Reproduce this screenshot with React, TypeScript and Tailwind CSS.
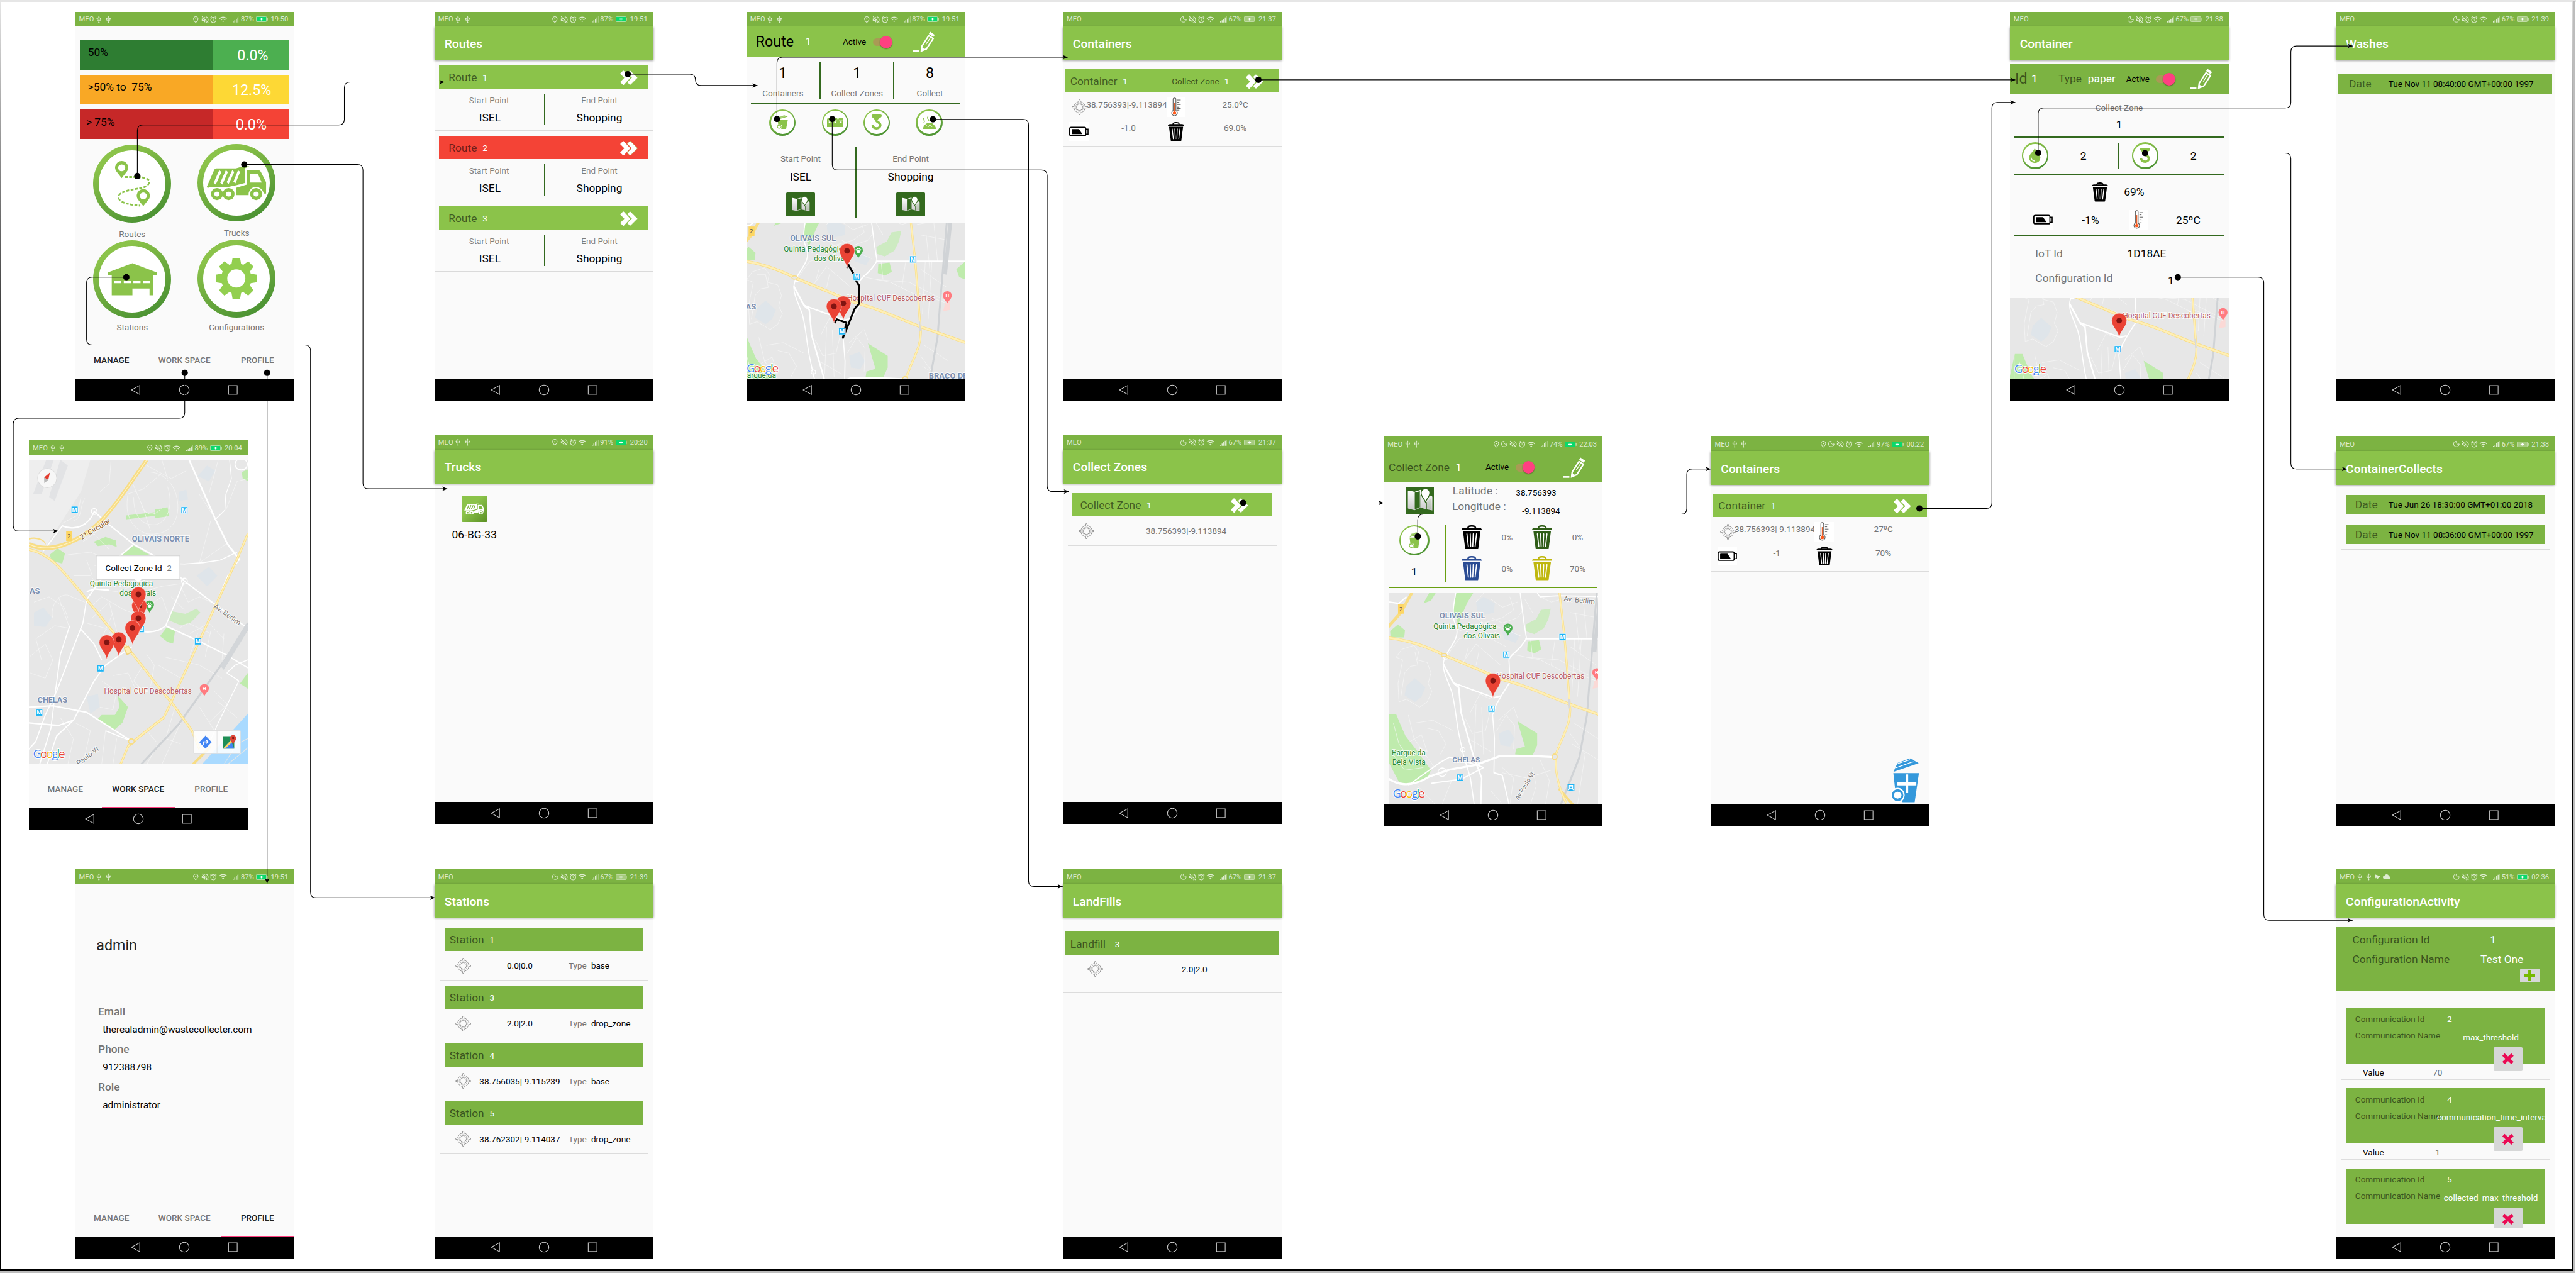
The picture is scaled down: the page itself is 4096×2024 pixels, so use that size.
import React from "react";
import { MdUsb, MdOutlinePlace, MdOutlineVolumeOff, MdAlarm, MdWifi, MdCloud } from "react-icons/md";
import { Moon } from "lucide-react";

type Kids = { children?: React.ReactNode };

/* ---------- small drawings ---------- */

const Chevrons = () => (
  <svg className="h-[26px] w-[31px] shrink-0" viewBox="0 0 31 26" fill="#fff">
    <path d="M0 5.5 5 .5Q6 0 7 1L18 13 7 25Q6 26 5 25.500L0 20.500 7.500 13Z" />
    <path d="M12.500 5 17 .5Q18 0 19 1L31 13 19 25Q18 26 17 25.500L12.500 21 20.500 13Z" stroke="#8BC34A" strokeWidth=".6" />
  </svg>
);

const Target = () => (
  <svg className="h-[28px] w-[28px] shrink-0" viewBox="0 0 28 28" fill="none" stroke="#8a8a8a" strokeWidth="1">
    <circle cx="14" cy="14" r="5.600" />
    <circle cx="14" cy="14" r="7.300" stroke="#b5b5b5" />
    <circle cx="14" cy="14" r="10" />
    <path fill="#fafafa" d="M12.500 4.500 13 .8H15L15.500 4.500M12.500 23.500 13 27.200H15L15.500 23.500M4.500 12.500.8 13V15L4.500 15.500M23.500 12.500 27.200 13V15L23.500 15.500" />
  </svg>
);

const Thermo = () => (
  <svg className="h-[34px] w-[34px] shrink-0 bg-white" viewBox="0 0 34 34" fill="none">
    <path d="M11.500 23V3.500a2.500 2.500 0 0 1 5 0V23a5 5 0 1 1-5 0Z" stroke="#5f5f5f" strokeWidth="1.300" />
    <path d="M14 9V26" stroke="#e8622e" strokeWidth="1.700" />
    <circle cx="14" cy="27.500" r="3" fill="#ff5a1c" />
    <path d="M18.800 4.500H25M18.800 8.500H22.500M18.800 12.500H25M18.800 17H22.500M18.800 19.500H25M18.800 22.500H22.500" stroke="#555" strokeWidth="1.100" />
  </svg>
);

const Battery = () => (
  <svg className="h-[34px] w-[35px] shrink-0 bg-white" viewBox="0 0 35 34">
    <rect x="1" y="9.500" width="28.500" height="15" rx="2.500" fill="#fff" stroke="#000" strokeWidth="2" />
    <path d="M30 12.500H33.500V21.500H30" fill="none" stroke="#000" strokeWidth="1.800" />
    <path d="M4.500 13.500Q4.500 12.500 6 12.500H17.500L23.500 21.500H4.500Z" />
  </svg>
);

const Trash = ({ size, color }: { size: string; color: string }) => (
  <svg className={`shrink-0 ${size}`} viewBox="0 0 36 43" preserveAspectRatio="none">
    <path d="M11 5.500C12 1.200 14 1.500 18 1.500S24 1.200 25 5.500" fill="none" stroke={color} strokeWidth="2.800" />
    <path d="M0 8.500Q.5 4.500 5 4.500H31Q35.500 4.500 36 8.500Z" fill={color} />
    <path d="M2.500 10.500H33.500L29.500 42Q29.300 43 28 43H8Q6.700 43 6.500 42Z" fill={color} />
    <path d="M9.500 15.500 12 37.500M15.300 15.500 16.200 37.500M20.700 15.500 19.800 37.500M26.500 15.500 24 37.500" stroke="#fff" strokeWidth="1.900" strokeLinecap="round" />
  </svg>
);

const WheelBin = ({ size, color, plus }: { size: string; color: string; plus?: boolean }) => (
  <svg className={`shrink-0 ${size}`} viewBox="1028 1254 152 172" preserveAspectRatio="none">
    <path d="M1040 1308 1063 1273 1130 1256 1177 1274 1050 1305Z" fill={color} />
    <path d="M1063 1276 1130 1261M1052 1292 1148 1268" stroke="#fff" strokeWidth="3" />
    <path d="M1040 1312H1178L1155 1423H1090L1050 1375Z" fill={color} />
    <ellipse cx="1063" cy="1396" rx="38" ry="28" fill="#fff" />
    <ellipse cx="1063" cy="1396" rx="26" ry="18" fill="#fff" stroke={color} strokeWidth="10" />
    {plus && <path d="M1114 1317V1388M1062 1353H1164" stroke="#fff" strokeWidth="12" />}
  </svg>
);

const Pencil = () => (
  <svg className="h-[37px] w-[38px] shrink-0" viewBox="0 0 38 37" fill="none" stroke="#fff">
    <path d="M0 35H10.500" strokeWidth="3" />
    <path d="M14.500 34.500 15.500 26 27.500 7.500 35.500 12.500 23.500 31Z" strokeWidth="2.600" />
    <path d="M14 35.500 15 28.500 20.500 32Z" fill="#fff" strokeWidth="1" />
    <path d="M29 2.500 37 8" strokeWidth="4.500" />
    <path d="M22.500 23 31 10.500" strokeWidth="1.500" />
  </svg>
);

const FoldedMap = ({ size }: { size: string }) => (
  <svg className={`shrink-0 ${size}`} viewBox="0 0 52 52" preserveAspectRatio="none">
    <defs>
      <linearGradient id="paper" x1="0" y1="0" x2="0" y2="1">
        <stop offset="0" stopColor="#fff" />
        <stop offset="1" stopColor="#c9c9c9" />
      </linearGradient>
    </defs>
    <path d="M2 9Q2 7 4 7L15 10 27 6 38 14 48 18Q50 18 50 20V46Q50 47 48 46L38 44 27 41 15 46 3 43Q2 43 2 41Z" fill="url(#paper)" />
    <path d="M15.500 11.500 25.500 8.500V40L15.500 44.500Z" fill="#33691E" />
    <path d="M39 30 48 22V43.500L39 42Z" fill="#33691E" opacity=".12" />
    <path d="M38.500 30V44M27.500 16V41" stroke="#33691E" strokeWidth="1.400" />
    <path d="M36.500 30C34.500 24 28 19 28 12A8.200 8.200 0 0 1 45 12C45 19 38.500 24 36.500 30Z" fill="#fff" stroke="#33691E" strokeWidth="1.800" />
  </svg>
);

const Hook = () => (
  <svg className="h-[28px] w-[20px] shrink-0" viewBox="0 0 20 28">
    <path d="M1 2Q1 0 3 0H17Q19 0 19 2C19 5 16 6 13 8L11 10H6.500C6.500 7 1 6 1 2Z" fill="#8BC34A" />
    <path d="M8.500 8.500C8.500 14 16.500 13 16.500 19 16 26 5 26.500 3 20" fill="none" stroke="#8BC34A" strokeWidth="4.200" strokeLinecap="round" />
  </svg>
);

const Drop = () => (
  <svg className="h-[27px] w-[21px] shrink-0" viewBox="0 0 21 27">
    <path d="M10.500 0C12 6 20.500 11 20.500 17.500A10 9.500 0 0 1 .5 17.500C.5 11 9 6 10.500 0Z" fill="#8BC34A" />
    <path d="M4 17.500C4.500 21.500 6.500 23 10 23.500" fill="none" stroke="#fff" strokeWidth="1.600" strokeLinecap="round" />
  </svg>
);

const ThreeBins = () => (
  <svg className="h-[17px] w-[29px] shrink-0" viewBox="0 0 29 17">
    {[0, 10, 20].map((x) => (
      <g key={x} fill="#8BC34A">
        <path d={`M${x} 17V4Q${x} 0 ${x + 4.5} 0T${x + 9} 4V17Z`} />
        <path d={`M${x + 1.5} 4.500H${x + 7.5}`} stroke="#fff" strokeWidth=".7" />
        <rect x={x + 3} y="7" width="3" height="3" fill="#fff" />
      </g>
    ))}
  </svg>
);

const Dump = () => (
  <svg className="h-[24px] w-[26px] shrink-0" viewBox="0 0 26 24" fill="none" stroke="#8BC34A">
    <path d="M1 24 4 17 9 13H18L23 18 26 24Z" fill="#8BC34A" stroke="none" />
    <path d="M4 4Q1 6 3.500 8T3 12M11 1Q8 4 11 6T10 10M18 0Q15 3 18 5T18 10M22 7Q20 9 22 11" strokeWidth="1.300" />
    <path d="M8 17 11 20 14 16 18 20" stroke="#fff" strokeWidth="1" />
  </svg>
);

const Truck = ({ size, color, gap }: { size: string; color: string; gap: string }) => (
  <svg className={`shrink-0 ${size}`} viewBox="770 628 322 138" preserveAspectRatio="none">
    <path d="M773 712 812 648Q816 642 824 642H928L965 634H1000L975 642V698L930 706 880 714H790Q775 718 773 712Z" fill={color} />
    <path d="M815 700 845 652M850 700 880 652M884 698 914 652M920 696 945 652" stroke={gap} strokeWidth="13" />
    <path d="M986 652Q986 649 992 649H1050Q1058 649 1062 656L1089 695V738H1076A40 28 0 0 0 996 744H930V716L986 704Z" fill={color} />
    <path d="M1003 664H1046L1066 696H1003Z" fill={gap} />
    {[827, 889, 1036].map((x) => (
      <g key={x}>
        <ellipse cx={x} cy="740" rx="32" ry="23" fill={color} />
        <ellipse cx={x} cy="740" rx="14" ry="9.500" fill={gap} />
      </g>
    ))}
  </svg>
);

const RoutePins = () => (
  <svg className="h-[81px] w-[62px] shrink-0" viewBox="284 613 186 174" preserveAspectRatio="none">
    <path d="M336 674H395C440 674 470 682 466 693 462 714 420 716 380 721 330 728 298 738 302 752 306 774 370 780 418 783" fill="none" stroke="#8BC34A" strokeWidth="7" strokeDasharray="15 8" />
    {[[319, 641], [434, 748]].map(([x, y]) => (
      <g key={x}>
        <path d={`M${x} ${y + 37}L${x - 30} ${y + 10}A35 25 0 1 1 ${x + 30} ${y + 10}Z`} fill="#8BC34A" />
        <ellipse cx={x} cy={y - 2} rx="19" ry="13" fill="#fff" />
      </g>
    ))}
  </svg>
);

const Warehouse = () => (
  <svg className="h-[58px] w-[86px] shrink-0" viewBox="243 1002 258 125" preserveAspectRatio="none" fill="#8BC34A">
    <path d="M243 1038 372 1003 501 1038V1050H482V1126H463V1100H372V1126H262V1050H243Z" />
    <path d="M275 1075H313M326 1075H364M377 1075H415M427 1075H465" stroke="#fff" strokeWidth="9" />
  </svg>
);

const Gear = () => (
  <svg className="h-[73px] w-[73px] shrink-0" viewBox="-50 -50 100 100">
    <circle r="37" fill="#92CF4F" />
    {[0, 45, 90, 135, 180, 225, 270, 315].map((a) => (
      <path key={a} d="M-12-33-9-50H9L12-33Z" fill="#92CF4F" transform={`rotate(${a})`} />
    ))}
    <circle r="22" fill="#fff" />
  </svg>
);

const Ring = ({ size, children }: Kids & { size: string }) => (
  <div className={`flex shrink-0 rounded-full bg-linear-[150deg] from-[#8BC34A] from-20% via-[#6fac3f] to-[#3f8a2f] ${size}`}>
    <div className="flex flex-1 items-center justify-center rounded-full bg-white">{children}</div>
  </div>
);
const SMALL_RING = "size-[47px] p-[2.500px]";

const Switch = () => (
  <div className="flex h-[22px] w-[34px] shrink-0 items-center">
    <div className="h-[14px] w-[30px] shrink-0 rounded-full bg-[#a99a55]" />
    <div className="-ml-[18px] size-[22px] shrink-0 rounded-full bg-[#FF4081] shadow-[0_1px_2px_rgba(0,0,0,0.4)]" />
  </div>
);

/* ---------- phone frame ---------- */

type Status = { time: string; pct: string; usb?: boolean; pin?: boolean; moon?: boolean; charging?: boolean; extra?: boolean };

const StatusBar = ({ time, pct, usb, pin, moon, charging, extra }: Status) => (
  <div className="flex h-[26px] shrink-0 items-center bg-[#7CB342] pt-[1px] pr-[9px] pl-[7px] text-[12.500px] leading-none text-white/75 *:shrink-0">
    <span>MEO</span>
    {usb && <MdUsb className="ml-[2px] size-[14px]" />}
    {usb && <MdUsb className="ml-[2px] size-[14px]" />}
    {extra && (
      <svg className="ml-[4px] h-[9px] w-[10px]" viewBox="0 0 10 9" fill="currentColor">
        <path d="M0 0 10 3.500 4 9 2.500 6 0 9Z" />
      </svg>
    )}
    {extra && <MdCloud className="ml-[4px] size-[13px]" />}
    <span className="ml-auto" />
    {pin && <MdOutlinePlace className="mr-[1px] size-[14px]" />}
    {moon && <Moon className="mr-[1.500px] size-[13px]" />}
    <MdOutlineVolumeOff className="size-[16px]" />
    <MdAlarm className="ml-[.5px] size-[14px]" />
    <MdWifi className="ml-[2px] size-[15px]" />
    <svg className="ml-[9.500px] h-[11px] w-[12px]" viewBox="0 0 12 11" fill="currentColor">
      <path d="M0 9H1.800V11H0ZM2.800 7H4.600V11H2.800ZM5.600 4.500H7.400V11H5.600ZM8.400 2H10V11H8.400Z" />
      <path d="M11 0H12V11H11Z" opacity=".5" />
    </svg>
    <span className="ml-[3px] w-[24px]">{pct}</span>
    <svg className="ml-[3px] h-[10px] w-[21px]" viewBox="0 0 21 10">
      <rect x=".5" y=".5" width="18" height="9" rx="1" fill={charging ? "#0bd96b" : "#a5cb7e"} stroke="#d3e6c0" strokeWidth=".8" />
      <path d="M6.500 5H12.500M9.500 2.800V7.200" stroke="#fff" strokeWidth="1.500" />
      <path d="M20.200 2.500V7.500" stroke="#d3e6c0" strokeWidth="1.300" />
    </svg>
    <span className="ml-[5px] w-[32px]">{time}</span>
  </div>
);

const NavBar = () => (
  <div className="flex h-[39px] shrink-0 items-center bg-black">
    <svg className="h-[20px] w-full" viewBox="0 0 388 20" fill="none" stroke="#cfcfcf" strokeWidth="1.200">
      <path d="M100.500 10 115 2V18Z" />
      <circle cx="194" cy="10" r="8.600" />
      <rect x="272.500" y="2.300" width="15.400" height="15.400" />
    </svg>
  </div>
);

const Phone = ({ at, status, title, children }: Kids & { at: string; status: Status; title?: string }) => (
  <section className={`absolute flex h-[690px] w-[388px] flex-col bg-[#fafafa] leading-none ${at}`}>
    <StatusBar {...status} />
    {title && (
      <div className="relative z-10 flex h-[60px] shrink-0 items-center bg-[#8BC34A] pt-[2px] pl-[18px] text-[21.500px] font-medium text-white shadow-[0_1px_4px_rgba(0,0,0,0.45)]">
        {title}
      </div>
    )}
    <div className="flex min-h-0 flex-1 flex-col overflow-hidden whitespace-nowrap *:shrink-0">{children}</div>
    <NavBar />
  </section>
);

const Tabs = ({ active }: { active: string }) => (
  <div className="mt-auto grid h-[69px] grid-cols-3 text-[15.100px] font-medium">
    {["MANAGE", "WORK SPACE", "PROFILE"].map((t) => (
      <div
        key={t}
        className={
          t === active
            ? "flex items-center justify-center border-b-[2px] border-[#FF4081] pt-[4px] text-[#212121]"
            : "flex items-center justify-center border-b-[2px] border-transparent pt-[4px] text-[#757575]"
        }
      >
        {t}
      </div>
    ))}
  </div>
);

const HLine = ({ className }: { className: string }) => <div className={`mx-[8.700px] h-[2px] ${className}`} />;

/* ---------- map ---------- */

const SX = 3;
const SY = 2.148;

const Label = ({ x, y, size = 13.3, color, bold, end, rot = 0, text }: { x: number; y: number; size?: number; color: string; bold?: boolean; end?: boolean; rot?: number; text: string }) => (
  <text
    x={x / SX}
    y={y / SY + size * 0.355}
    fontSize={size}
    fill={color}
    fontWeight={bold ? 700 : 400}
    textAnchor={end ? "end" : "start"}
    stroke="#fff"
    strokeOpacity=".8"
    strokeWidth="2"
    paintOrder="stroke"
    transform={`rotate(${rot} ${x / SX} ${y / SY})`}
  >
    {text}
  </text>
);

const Marker = ({ x, y }: { x: number; y: number }) => (
  <g transform={`translate(${x / SX} ${y / SY})`}>
    <path d="M0 0C-1-12-13.400-20-13.400-31A13.400 13 0 0 1 13.400-31C13.400-20 1-12 0 0Z" fill="#EA4335" stroke="#fff" strokeWidth=".6" />
    <circle cy="-31" r="5" fill="#811411" />
  </g>
);

const Metro = ({ x, y }: { x: number; y: number }) => (
  <g transform={`translate(${x / SX} ${y / SY})`}>
    <rect x="-6" y="-6" width="12" height="12" rx="1" fill="#1eb4f5" stroke="#fff" strokeWidth=".8" />
    <text y="3.800" textAnchor="middle" fontSize="10.500" fontWeight="700" fill="#fff">M</text>
  </g>
);

const Poi = ({ x, y, color, letter }: { x: number; y: number; color: string; letter?: string }) => (
  <g transform={`translate(${x / SX} ${y / SY})`}>
    <path d="M0 0C-2-5-8-8-8-14A8 7.500 0 0 1 8-14C8-8 2-5 0 0Z" fill={color} />
    {letter ? (
      <text y="-10.500" textAnchor="middle" fontSize="9" fontWeight="700" fill="#fff">{letter}</text>
    ) : (
      <g fill="#fff">
        <ellipse cy="-11.500" rx="3.200" ry="2.500" />
        <circle cx="-4" cy="-14.500" r="1.200" />
        <circle cx="-1.500" cy="-16.800" r="1.200" />
        <circle cx="1.500" cy="-16.800" r="1.200" />
        <circle cx="4" cy="-14.500" r="1.200" />
      </g>
    )}
  </g>
);

const Shield = ({ x, y }: { x: number; y: number }) => (
  <g transform={`translate(${x / SX} ${y / SY})`}>
    <rect x="-5" y="-8.500" width="10.500" height="17" fill="#fdd663" />
    <text y="4" textAnchor="middle" fontSize="11" fill="#555">2</text>
  </g>
);

const Google = ({ x, y }: { x: number; y: number }) => (
  <text x={x / SX} y={y / SY + 7} fontSize="21" textLength="57" fontWeight="500" fontFamily="'Open Sans', sans-serif" stroke="#fff" strokeWidth="2" paintOrder="stroke">
    <tspan fill="#4285F4">G</tspan>
    <tspan fill="#EA4335">o</tspan>
    <tspan fill="#FBBC05">o</tspan>
    <tspan fill="#4285F4">g</tspan>
    <tspan fill="#34A853">l</tspan>
    <tspan fill="#EA4335">e</tspan>
  </text>
);

const MapView = ({ x, y, w, h, size, art, dx = 0, dy = 0, children }: Kids & { x: number; y: number; w: number; h: number; size: string; art: React.ReactNode; dx?: number; dy?: number }) => (
  <svg className={size} viewBox={`${x / SX} ${y / SY} ${w / SX} ${h / SY}`} preserveAspectRatio="none">
    <g transform={`scale(${1 / SX} ${1 / SY}) translate(${dx} ${dy})`}>{art}</g>
    {children}
  </svg>
);

const OlivaisArt = (
  <g fill="none" strokeLinejoin="round">
    <rect x="0" y="500" width="1500" height="1100" fill="#e7e7e7" />
    <g fill="#dfe5ea">
      <path d="M190 980 235 950 290 985 270 1020 235 1040 180 1015Z" />
      <path d="M560 660 600 640 660 665 655 700 600 710 565 690Z" />
      <path d="M680 1160 735 1145 765 1180 740 1210 690 1205Z" />
      <path d="M700 775 740 760 790 790 770 815 710 800Z" />
    </g>
    <g fill="#bfebad">
      <path d="M95 1087H135L160 1130 185 1170 250 1230 320 1300 300 1330 200 1357 150 1345 95 1270Z" />
      <path d="M438 690 455 626H545L515 660 490 700 465 745Z" />
      <path d="M103 770 145 745 182 768 178 795 105 795Z" />
      <path d="M835 810 895 805 907 840 870 855 832 845Z" />
      <path d="M780 1113 885 1160V1205L860 1245 768 1240 772 1220 820 1210Z" />
      <path d="M280 665 310 626H345L320 655Z" />
      <path d="M95 1290 60 1200 95 1087Z" />
      <path d="M1250 830 1298 800V870L1265 860Z" />
    </g>
    <path d="M825 745 880 725 905 690 957 685 945 725 920 760 870 782 828 772Z" fill="#cdebc1" />
    <path d="M1190 960 1215 945 1215 985 1180 990Z" fill="#fbd9d6" />
    <g stroke="#f6f6f6" strokeWidth="2">
      <path d="M135 870 165 840 230 825 255 850 245 880 300 890 320 930 305 970 325 1000 300 1040 260 1060 190 1030 150 1040 145 970 170 880Z" />
      <path d="M190 850 235 850 250 900 210 905 180 930 160 1020" />
      <path d="M410 860 470 800 540 790 640 800 720 830M480 900 560 820 690 900M450 880 640 930M500 880 520 830M560 900 575 850M470 770 600 740 700 760 800 790" />
      <path d="M640 720 700 740 780 720 810 690M560 720 600 740 700 720 760 690 740 640M560 660 600 626M640 650 700 680 780 660" />
      <path d="M830 870 1000 880 1190 950M760 860 900 880 1040 930M850 800 860 870M980 805 960 900M1060 830 1200 900M1085 800 1070 1000M1120 800 1100 1020M1045 920 1200 960" />
      <path d="M530 1080 580 1010 640 1030M500 1100 540 1160 610 1150 640 1060M520 1180 640 1230M560 1050 550 1230M590 1060 600 1240M680 1110 760 1060 780 1100M670 1150 720 1090 765 1130 760 1220" />
      <path d="M210 1190 270 1165 300 1230 250 1210M300 1140 360 1150 400 1200 370 1240M240 1120 330 1110 440 1150M200 1090 230 1180 340 1290M120 1120 150 1200 200 1250M110 1230 180 1300 280 1290" />
      <path d="M700 1290 760 1330 740 1429M860 1290 880 1360 850 1429M700 1310 830 1330 960 1300M900 1260 950 1340 930 1429M1080 1120 1208 1180M1070 1200 1208 1260M1060 1160 1140 1240 1100 1429M250 1360 340 1429M430 1340 380 1429M640 1380 700 1429" />
      <path d="M1060 700 1208 720M1040 660 1208 640M1090 700 1110 840M1130 650 1150 800M900 640 960 660 1010 650M860 700 820 650" />
    </g>
    <g stroke="#fff" strokeWidth="5.500">
      <path d="M458 600C440 670 430 715 448 740 478 785 440 815 410 850 385 880 378 900 395 935L430 1000C450 1050 452 1100 468 1160L492 1240 530 1330 550 1429" />
      <path d="M385 895 440 968 468 985 480 1080 520 1180 548 1250 590 1330 585 1429" strokeWidth="8" />
      <path d="M440 968 655 1024 690 1018" />
      <path d="M740 965 700 1010 668 1050 648 1090 658 1180 655 1310 700 1320 735 1429" />
      <path d="M790 600 815 740 828 798C790 850 740 858 735 880L740 945" />
      <path d="M822 800H1300" />
      <path d="M60 1310C130 1365 220 1365 310 1325L420 1298 560 1280 690 1245 840 1245 975 1250" strokeWidth="8" />
      <path d="M200 1357 370 1270 420 1250 500 1265 600 1290M320 1350 480 1335 600 1290" strokeWidth="5" />
      <path d="M95 660 150 665 190 640" />
      <path d="M1000 636 1298 640M860 600 900 640 1000 636" strokeWidth="4" />
    </g>
    <g stroke="#fff" strokeWidth="4">
      <ellipse cx="380" cy="1308" rx="22" ry="16" />
      <ellipse cx="490" cy="1222" rx="12" ry="8" />
      <ellipse cx="400" cy="868" rx="14" ry="9" />
    </g>
    <path d="M1205 600 1165 950 1150 1090 1110 1250 1000 1450" stroke="#d0d3d6" strokeWidth="10" />
    <path d="M1225 600 1190 850" stroke="#d0d3d6" strokeWidth="20" />
    <g stroke="#f8dd85" strokeWidth="11">
      <path d="M60 793C200 803 300 830 390 862 520 900 620 930 700 955L740 963C850 985 950 1020 1055 1048L1300 1110" />
      <path d="M1000 600 1030 790 1045 920 1058 1048C1075 1120 1010 1180 985 1240 978 1310 1000 1370 1040 1425" />
      <path d="M1000 1370 1080 1435" />
      <path d="M60 780 160 700 230 610" strokeWidth="14" />
    </g>
    <g stroke="#ffefb4" strokeWidth="7">
      <path d="M60 793C200 803 300 830 390 862 520 900 620 930 700 955L740 963C850 985 950 1020 1055 1048L1300 1110" />
      <path d="M1000 600 1030 790 1045 920 1058 1048C1075 1120 1010 1180 985 1240 978 1310 1000 1370 1040 1425" />
    </g>
    <ellipse cx="978" cy="1249" rx="14" ry="10" fill="#e7e7e7" stroke="#f8dd85" strokeWidth="5" />
    <ellipse cx="390" cy="862" rx="15" ry="6" fill="#e7e7e7" stroke="#f8dd85" strokeWidth="4" />
    <path d="M1054 1030 1058 1065" stroke="#d9d9d9" strokeWidth="8" />
  </g>
);

const WorkspaceArt = (
  <g fill="none" strokeLinejoin="round">
    <rect x="0" y="100" width="1400" height="1200" fill="#e7e7e7" />
    <path d="M93 118H420L370 240 270 350 180 450 93 430Z" fill="#eeeeee" />
    <path d="M185 118 115 250H160L225 118ZM260 118 200 260 230 275 300 140Z" fill="#e2e3e5" />
    <path d="M1257 1085 1013 1278H1257Z" fill="#a9daff" />
    <path d="M1130 1278 1200 1200 1257 1180M1150 1278 1257 1215" stroke="#e7e7e7" strokeWidth="3" />
    <g fill="#dfe5ea">
      <path d="M890 240 930 232 940 270 890 275Z" />
      <path d="M990 180 1040 140 1085 160 1050 200Z" />
      <path d="M985 560 1050 525 1095 560 1040 600Z" />
      <path d="M120 700 170 680 215 720 180 755 120 750Z" />
      <path d="M400 1020 460 1010 470 1060 420 1085Z" />
    </g>
    <g fill="#bfebad">
      <path d="M438 430 500 412 555 425 560 450 520 440 460 447Z" />
      <path d="M203 480 245 455 285 475 270 513 215 503Z" />
      <path d="M590 480 650 445 735 480Z" />
      <path d="M610 330 760 318 762 332 610 345Z" />
      <path d="M762 308 830 299 840 333 765 340Z" />
      <path d="M790 790 825 757 870 770 860 818 830 812Z" />
      <path d="M565 1015 620 1060 590 1120 545 1148 460 1105 480 1090 550 1090 575 1060Z" />
      <path d="M1225 165 1257 155V198L1230 190Z" />
      <path d="M1215 970 1257 930V990Z" />
    </g>
    <path d="M838 730 855 695 925 705 985 685 1005 700 950 740 900 748Z" fill="#cdebc1" />
    <g stroke="#f6f6f6" strokeWidth="2">
      <path d="M620 250C600 330 640 380 720 400 830 410 890 360 885 290 880 220 820 170 740 165M650 260C650 340 700 370 770 365 840 350 860 280 830 220M690 280C700 330 760 340 800 300M610 250 700 230 800 170M640 200 700 300 740 390" />
      <path d="M220 720C200 680 260 610 320 640L390 660M250 640 310 760 230 750 130 800 160 880M120 660 200 640 280 680 300 720" />
      <path d="M420 680 480 640 600 690 640 700M430 720 520 660 560 770M400 740 500 760 560 800M450 610 560 620 640 600M480 800 540 700" />
      <path d="M300 480 420 470 520 500M440 520 560 540 640 500M330 560 420 560 470 600M380 430 440 400 520 460M400 500 430 560" />
      <path d="M700 620 800 600 900 590M720 680 800 640 830 700M900 600 940 660 1000 640 1060 660M890 760 940 740 1060 780M850 640 920 690" />
      <path d="M950 780 1050 740 1130 800M990 780 950 860M1060 770 1030 870M1130 780 1120 880M820 870 1000 900 1120 950M720 860 760 900 740 980M780 900 900 950M700 900 650 960 700 1000" />
      <path d="M540 940 620 930 660 990M480 960 560 1000 540 1070 470 1060M340 1120 420 1150 380 1278M500 1150 480 1278M560 1180 540 1278M260 1100 330 1180 300 1278" />
      <path d="M870 1060 820 1180 900 1200M900 1120 800 1278M720 1150 780 1200 720 1278M1100 1040 1200 1100M1080 1000 1150 1050 1050 1120M1000 1060 1080 1150" />
      <path d="M720 140 850 190 930 160M800 118 830 190M1100 118 1050 250M1000 250 1085 345M1140 310 1200 200 1257 190M1060 350 1030 430 1000 510 1110 500M1140 440 1080 470 1000 510" />
      <path d="M370 260 350 330 270 360M390 265C360 300 380 340 330 350M470 240 520 210 530 118M93 870 180 820 220 880 180 950 100 930" />
    </g>
    <g stroke="#fff" strokeWidth="5.500">
      <path d="M945 118 1085 345 1150 440 1215 500" strokeWidth="8" />
      <path d="M440 315C410 370 340 390 270 370L170 465" />
      <path d="M440 315 510 360 650 440 800 500 920 580 1085 670 1257 760" />
      <path d="M650 440 560 495 480 570 400 650 380 740 320 850 240 1000 180 1090 130 1190 93 1220" />
      <path d="M400 620 440 610 520 615M330 590 400 650M365 760 440 820 480 880" />
      <path d="M310 750 260 860 235 995 210 1140 150 1278" />
      <path d="M820 750 1000 810 1140 860 1257 910" />
      <path d="M680 770C740 780 790 770 820 750L920 580M640 830 500 900 440 960 330 1110 240 1170 190 1278" />
      <path d="M93 1060 220 1055 400 1080 520 1135 640 1190M93 1120 250 1130 330 1110" />
      <path d="M500 1150 640 1190M740 510 920 515 1020 510 1110 500 1200 470" strokeWidth="4" />
      <path d="M1210 500 1150 560 1085 670M1210 960 1100 1120 1050 1200M1145 930 1210 960M1257 880 1190 900 1145 930" strokeWidth="4" />
      <path d="M1160 118 1170 190 1140 250 1135 310 1085 345" strokeWidth="4" />
      <ellipse cx="1222" cy="135" rx="33" ry="22" strokeWidth="5" />
      <ellipse cx="920" cy="580" rx="16" ry="11" strokeWidth="4" />
      <ellipse cx="440" cy="315" rx="15" ry="11" strokeWidth="4" />
    </g>
    <path d="M1257 740 1150 865 890 1125 690 1278" stroke="#cfd2d5" strokeWidth="9" />
    <path d="M1257 750 1120 910" stroke="#d3d6d9" strokeWidth="24" />
    <g stroke="#f8dd85" strokeWidth="11">
      <path d="M93 440C200 475 330 440 440 375 530 320 620 220 720 118" strokeWidth="17" />
      <path d="M93 460C200 475 260 530 330 590 450 690 540 780 610 830 700 900 770 980 850 1040 900 1090 940 1130 960 1150L1000 1220" />
      <path d="M1257 400 1210 480 850 1040 810 1100C740 1140 660 1180 620 1210L580 1278" />
      <path d="M965 1278 1060 1210" />
      <path d="M93 420C130 410 180 425 180 440" strokeWidth="5" />
    </g>
    <g stroke="#ffefb4" strokeWidth="6">
      <path d="M93 460C200 475 260 530 330 590 450 690 540 780 610 830 700 900 770 980 850 1040 900 1090 940 1130 960 1150L1000 1220" />
      <path d="M1257 400 1210 480 850 1040 810 1100C740 1140 660 1180 620 1210L580 1278" />
    </g>
    <path d="M93 440C200 475 330 440 440 375 530 320 620 220 720 118" stroke="#fff3c4" strokeWidth="3" />
    <path d="M600 835 622 828 640 850 615 860Z" fill="#ffefb4" stroke="#f3d27a" strokeWidth="5" />
    <ellipse cx="638" cy="1191" rx="15" ry="10" fill="#e7e7e7" stroke="#f8dd85" strokeWidth="5" />
  </g>
);

const HOSP = "#bb5e63";
const BLUE = "#7b8fb0";
const GREEN = "#2a8a34";

/* ---------- list rows ---------- */

const MEO_NIGHT = { pct: "67%", moon: true };

const RouteRow = ({ n, bar, line }: { n: string; bar: string; line: string }) => (
  <div className={`h-[125px] border-b-[1.200px] pt-[9.300px] ${line}`}>
    <div className={`mx-[8.300px] flex h-[41.300px] items-center pt-[2px] pr-[19px] pl-[17px] ${bar}`}>
      <span className="text-[19.400px] text-black/55">Route</span>
      <span className="ml-[10px] text-[15.100px] text-white">{n}</span>
      <span className="ml-auto"><Chevrons /></span>
    </div>
    <div className="mt-[9px] flex h-[55px]">
      <div className="flex w-[194px] flex-col items-center pt-[4px]">
        <span className="text-[15.100px] text-black/50">Start Point</span>
        <span className="mt-[14px] ml-[3px] text-[19.400px] text-black">ISEL</span>
      </div>
      <div className="w-[1.300px] bg-[#33691E]" />
      <div className="flex flex-1 flex-col items-center pt-[4px] pl-[2px]">
        <span className="text-[15.100px] text-black/50">End Point</span>
        <span className="mt-[14px] text-[19.400px] text-black">Shopping</span>
      </div>
    </div>
  </div>
);

const ContainerRow = ({ zone, temp, charge, fill }: { zone?: string; temp: string; charge: string; fill: string }) => (
  <div className="h-[153px] border-b-[1.500px] border-[#dcdcdc] pt-[16px] text-[15.100px] text-[#757575]">
    <div className="mx-[4.500px] flex h-[41px] items-center bg-[#8BC34A] pt-[2px] pl-[9px]">
      <span className="w-[93px] text-[19.400px] text-black/55">Container</span>
      <span className="w-[87px] text-white">1</span>
      <span className="w-[93px] text-black/60">{zone ? "Collect Zone" : ""}</span>
      <span className="w-[38px] text-white">{zone}</span>
      <Chevrons />
    </div>
    <div className="mt-[9px] flex h-[34px] items-start pl-[16px] *:shrink-0">
      <span className="mt-[3px]"><Target /></span>
      <span className="mt-[5px] -ml-[2px] w-[142px]">38.756393|-9.113894</span>
      <Thermo />
      <span className="mt-[5px] w-[176px] text-center">{temp}</span>
    </div>
    <div className="mt-[9px] flex h-[34px] items-start pl-[12px] *:shrink-0">
      <Battery />
      <span className="mt-[4px] w-[140px] text-center">{charge}</span>
      <Trash size="h-[34px] w-[29px]" color="#000" />
      <span className="mt-[4px] w-[180px] text-center">{fill}</span>
    </div>
  </div>
);

const StationRow = ({ n, pos, kind }: { n: string; pos: string; kind: string }) => (
  <div className="mx-[9px] h-[102.500px] border-b-[1.300px] border-[#dcdcdc] pt-[8.500px] text-[15.100px]">
    <div className="mx-[9px] flex h-[41.300px] items-center bg-[#7CB342] pt-[4px] pl-[9px]">
      <span className="w-[71px] text-[19.400px] text-black/55">Station</span>
      <span className="text-white">{n}</span>
    </div>
    <div className="mt-[12px] flex h-[28px] items-center pl-[28px] *:shrink-0">
      <Target />
      <span className="w-[173px] pt-[2px] text-center text-black">{pos}</span>
      <span className="w-[40px] pt-[2px] text-[#757575]">Type</span>
      <span className="pt-[2px] text-black">{kind}</span>
    </div>
  </div>
);

const DateBar = ({ when, bar }: { when: string; bar: string }) => (
  <div className={`flex h-[34px] items-center bg-[#7CB342] pt-[1px] ${bar}`}>
    <span className="text-[19.400px] text-black/50">Date</span>
    <span className="ml-auto w-[260px] text-[15.100px] text-black">{when}</span>
  </div>
);

const CommCard = ({ id, name, value, left }: { id: string; name: string; value: string; left?: boolean }) => (
  <div className="mx-[9px] h-[142px] shrink-0 border-b-[1.300px] border-[#dedede] pt-[15px] text-[15.100px]">
    <div className="mx-[8.500px] h-[98px] bg-[#7CB342] pt-[10px] pl-[17px] text-black/55">
      <div className="flex h-[20px] items-center">
        <span className="w-[163px]">Communication Id</span>
        <span className="text-white">{id}</span>
      </div>
      <div className="mt-[9px] flex h-[20px] items-center">
        <span className="w-[145px] shrink-0">Communication Name</span>
        <span className={left ? "mt-[8px] h-[17px] w-[195px] shrink-0 overflow-hidden text-white" : "mt-[8px] -ml-[2px] h-[17px] w-[195px] shrink-0 text-center text-white"}>{name}</span>
      </div>
      <div className="mt-[10px] ml-[245px] flex h-[42px] w-[52px] items-center justify-center rounded-[2px] bg-[#d6d7d7]">
        <svg className="h-[21px] w-[22px]" viewBox="0 0 22 21">
          <path d="M3 3 19 18M19 3 3 18" stroke="#ea0a54" strokeWidth="6" />
        </svg>
      </div>
    </div>
    <div className="flex h-[28px] items-center pt-[4px] pl-[39px]">
      <span className="w-[95px] text-black">Value</span>
      <span className="w-[75px] text-center text-[#757575]">{value}</span>
    </div>
  </div>
);

/* ---------- connectors ---------- */

type Pt = [number, number];

const rounded = (pts: Pt[]) => {
  let d = `M${pts[0][0]} ${pts[0][1]}`;
  for (let i = 1; i < pts.length - 1; i++) {
    const [p, c, n] = [pts[i - 1], pts[i], pts[i + 1]];
    const a = Math.hypot(c[0] - p[0], c[1] - p[1]);
    const b = Math.hypot(n[0] - c[0], n[1] - c[1]);
    const r = Math.min(10, a / 2, b / 2);
    d += `L${c[0] + ((p[0] - c[0]) * r) / a} ${c[1] + ((p[1] - c[1]) * r) / a}`;
    d += `Q${c[0]} ${c[1]} ${c[0] + ((n[0] - c[0]) * r) / b} ${c[1] + ((n[1] - c[1]) * r) / b}`;
  }
  const e = pts[pts.length - 1];
  return `${d}L${e[0]} ${e[1]}`;
};

const LINKS: Pt[][] = [
  [[243.5, 312], [243.5, 221.5], [610.5, 221.5], [610.5, 145.5], [788, 145.5]],
  [[433, 291.5], [643.5, 291.5], [643.5, 866.5], [793, 866.5]],
  [[224, 491.5], [153.5, 491.5], [153.5, 611.5], [550.5, 611.5], [550.5, 1591.5], [771, 1591.5]],
  [[327.5, 661], [327.5, 741.5], [23.5, 741.5], [23.5, 941.5], [103, 941.5]],
  [[473.5, 661], [473.5, 1566]],
  [[1113, 131.5], [1233, 131.5], [1233, 151.5], [1343, 151.5]],
  [[1377.5, 211], [1377.5, 101.5], [1893, 101.5]],
  [[1475.5, 211], [1475.5, 301.5], [1856.5, 301.5], [1856.5, 871.5], [1895, 871.5]],
  [[1654, 211.5], [1823.5, 211.5], [1823.5, 1571.5], [1884, 1571.5]],
  [[2231, 141.5], [3573, 141.5]],
  [[2204, 891.5], [2453, 891.5]],
  [[2513.5, 951], [2513.5, 911.5], [2990.5, 911.5], [2990.5, 831.5], [3033, 831.5]],
  [[3403, 901.5], [3531.5, 901.5], [3531.5, 181.5], [3573, 181.5]],
  [[3613.5, 271], [3613.5, 191.5], [4061.5, 191.5], [4061.5, 81.5], [4171, 81.5]],
  [[3803, 271.5], [4061.5, 271.5], [4061.5, 831.5], [4161, 831.5]],
  [[3861, 491.5], [4013.5, 491.5], [4013.5, 1631.5], [4171, 1631.5]],
];

const Connectors = () => (
  <svg className="absolute inset-0 z-20 h-[2257px] w-[4567px]" viewBox="0 0 4567 2257" fill="none" stroke="#000" strokeWidth="1.250">
    {LINKS.map((pts, i) => {
      const [sx, sy] = pts[0];
      const [ex, ey] = pts[pts.length - 1];
      const down = pts[pts.length - 2][0] === ex;
      return (
        <g key={i}>
          <path d={rounded(pts)} />
          <circle cx={sx} cy={sy} r="5.600" fill="#000" stroke="none" />
          <path d="M0 0-9-4-6.500 0-9 4Z" fill="#000" stroke="none" transform={`translate(${ex} ${ey}) rotate(${down ? 90 : 0})`} />
        </g>
      );
    })}
  </svg>
);

/* ---------- screens ---------- */

const ManageScreen = () => (
  <Phone at="left-[133px] top-[21px]" status={{ time: "19:50", pct: "87%", usb: true, pin: true, charging: true }}>
    <div className="mt-[24px] ml-[8.700px] flex w-[371px] flex-col gap-[8.500px]">
      {[
        ["50%", "0.0%", "bg-[#2E7D32] pl-[14px]", "bg-[#4CAF50] pl-[6px]"],
        [">50% to  75%", "12.5%", "bg-[#F9A825] pl-[14px]", "bg-[#FDD835] pl-[2px]"],
        ["> 75%", "0.0%", "bg-[#C62828] pl-[11px]", "bg-[#F44336]"],
      ].map(([label, value, l, r]) => (
        <div key={label} className="flex h-[53px]">
          <div className={`w-[236px] pt-[13px] text-[19.400px] whitespace-pre text-black ${l}`}>{label}</div>
          <div className={`flex flex-1 items-center justify-center pt-[2px] text-[25.900px] text-white ${r}`}>{value}</div>
        </div>
      ))}
    </div>
    <div className="flex gap-[47px] pl-[32.500px] text-[15.100px] text-[#757575]">
      <div className="flex w-[138px] flex-col items-center pt-[10px]">
        <Ring size="size-[138px] p-[10px]"><RoutePins /></Ring>
        <span className="h-[31px] pt-[13px]">Routes</span>
        <Ring size="size-[138px] p-[10px]"><Warehouse /></Ring>
        <span className="pt-[9.500px]">Stations</span>
      </div>
      <div className="flex w-[138px] flex-col items-center pt-[8px]">
        <Ring size="size-[138px] p-[10px]"><Truck size="h-[64px] w-[107px]" color="#8BC34A" gap="#fff" /></Ring>
        <span className="h-[32px] pt-[13px]">Trucks</span>
        <Ring size="size-[138px] p-[10px]"><Gear /></Ring>
        <span className="pt-[10.500px]">Configurations</span>
      </div>
    </div>
    <Tabs active="MANAGE" />
  </Phone>
);

const RoutesScreen = () => (
  <Phone at="left-[770px] top-[21px]" title="Routes" status={{ time: "19:51", pct: "87%", usb: true, pin: true, charging: true }}>
    <RouteRow n="1" bar="bg-[#8BC34A]" line="border-[#dadada]" />
    <RouteRow n="2" bar="bg-[#F44336]" line="border-[#f0f0f0]" />
    <RouteRow n="3" bar="bg-[#8BC34A]" line="border-[#dadada]" />
  </Phone>
);

const RouteScreen = () => (
  <Phone at="left-[1323px] top-[21px]" status={{ time: "19:51", pct: "87%", usb: true, pin: true, charging: true }}>
    <div className="flex h-[54px] items-center bg-[#8BC34A] pt-[1px] pl-[17px] text-[15.100px] text-black *:shrink-0">
      <span className="w-[88px] text-[25.900px]">Route</span>
      <span className="w-[66px] text-[17.200px] text-white">1</span>
      <span className="w-[54px]">Active</span>
      <Switch />
      <span className="ml-[37px]"><Pencil /></span>
    </div>
    <div className="flex h-[82px] pt-[9px] text-[15.100px] text-[#757575]">
      {[
        ["1", "Containers", "w-[130px]"],
        ["1", "Collect Zones", "w-[128.500px]"],
        ["8", "Collect", "w-[125px]"],
      ].map(([n, label, w], i) => (
        <React.Fragment key={label}>
          {i > 0 && <div className="h-[65px] w-[2.300px] shrink-0 bg-[#33691E]" />}
          <div className={`flex flex-col items-center pt-[7px] ${w}`}>
            <span className="text-[25.900px] text-black">{n}</span>
            <span className="mt-[15px]">{label}</span>
          </div>
        </React.Fragment>
      ))}
    </div>
    <HLine className="-mt-[1.500px] bg-[#33691E]" />
    <div className="flex h-[67px] items-center pl-[41px]">
      <Ring size={SMALL_RING}><WheelBin size="h-[25px] w-[20px]" color="#8BC34A" /></Ring>
      <span className="w-[46px]" />
      <Ring size={SMALL_RING}><ThreeBins /></Ring>
      <span className="w-[27px]" />
      <Ring size={SMALL_RING}><Hook /></Ring>
      <span className="w-[46px]" />
      <Ring size={SMALL_RING}><Dump /></Ring>
    </div>
    <HLine className="bg-[#33691E]" />
    <div className="flex h-[142px] pt-[9px]">
      {[
        ["Start Point", "ISEL"],
        ["End Point", "Shopping"],
      ].map(([a, b], i) => (
        <React.Fragment key={a}>
          {i > 0 && <div className="h-[125px] w-[2.300px] bg-[#33691E]" />}
          <div className="flex w-[193px] flex-col items-center pt-[13px]">
            <span className="text-[15.100px] text-[#757575]">{a}</span>
            <span className="mt-[14.500px] text-[19.400px] text-black">{b}</span>
            <div className="mt-[17.500px] flex h-[43px] w-[52px] items-center justify-center rounded-[2px] bg-[#33691E]">
              <FoldedMap size="h-[31px] w-[34px]" />
            </div>
          </div>
        </React.Fragment>
      ))}
    </div>
    <MapView x={69} y={848} w={1164} h={596} size="h-[277.500px] w-full" art={OlivaisArt} dx={-65} dy={195}>
      <Shield x={95} y={881} />
      <Label x={301} y={907} size={14} color={BLUE} bold text="OLIVAIS SUL" />
      <Label x={267} y={947} color={GREEN} text="Quinta Pedagógica" />
      <Label x={621} y={983} color={GREEN} end text="dos Olivais" />
      <Poi x={664} y={983} color="#4caf50" />
      <Label x={604} y={1136} color={HOSP} text="Hospital CUF Descobertas" />
      <Poi x={1137} y={1155} color="#ff7b80" letter="H" />
      <Label x={64} y={1167} size={14.5} color={BLUE} bold text="AS" />
      <Label x={1038} y={1432} size={14.5} color={BLUE} bold text="BRACO DE" />
      <Label x={47} y={1429} color={GREEN} text="Parque da" />
      <Label x={368} y={1454} size={14} color={BLUE} text="CHELAS" />
      <Google x={69} y={1403} />
      <path d="M201.300 475 204 470 213 486 218 499 223 507V538L215 547 200 584 194 599 199 577 200 572 183 566 179 573" fill="none" stroke="#000" strokeWidth="3.400" strokeLinejoin="round" />
      <Metro x={955} y={988} />
      <Metro x={655} y={1054} />
      <Metro x={577} y={1262} />
      <Marker x={604} y={1022} />
      <Marker x={584} y={1222} />
      <Marker x={534} y={1233} />
    </MapView>
  </Phone>
);

const ContainerScreen = () => (
  <Phone at="left-[3563px] top-[21px]" title="Container" status={{ time: "21:38", ...MEO_NIGHT }}>
    <div className="mt-[5.700px] flex h-[54.300px] items-center bg-[#7CB342] pt-[1px] pl-[9.500px] text-[19.400px] text-white *:shrink-0">
      <span className="w-[29px] text-[25.900px] text-black/55">Id</span>
      <span className="w-[48px]">1</span>
      <span className="w-[52px] text-black/55">Type</span>
      <span className="w-[68px]">paper</span>
      <span className="w-[53px] text-[15.100px] text-black">Active</span>
      <Switch />
      <span className="ml-[27px]"><Pencil /></span>
    </div>
    <div className="flex h-[75px] flex-col items-center pt-[17px]">
      <span className="text-[15.100px] text-[#757575]">Collect Zone</span>
      <span className="mt-[12.500px] text-[19.400px] text-black">1</span>
    </div>
    <HLine className="bg-[#33691E]" />
    <div className="flex h-[64px] items-center pl-[21.500px] text-[19.400px] text-black *:shrink-0">
      <Ring size={SMALL_RING}><Drop /></Ring>
      <span className="w-[124px] pt-[2px] text-center">2</span>
      <div className="h-[46px] w-[2.300px] bg-[#33691E]" />
      <span className="w-[22px]" />
      <Ring size={SMALL_RING}><Hook /></Ring>
      <span className="w-[124px] pt-[2px] text-center">2</span>
    </div>
    <HLine className="bg-[#33691E]" />
    <div className="flex h-[61px] items-center pl-[145.500px] text-[19.400px] text-black">
      <Trash size="h-[34px] w-[29px]" color="#000" />
      <span className="ml-[28px] pt-[2px]">69%</span>
    </div>
    <div className="flex h-[46px] items-start pt-[2px] pl-[42px] text-[19.400px] text-black">
      <Battery />
      <span className="mt-[9px] ml-[51px] w-[83px]">-1%</span>
      <Thermo />
      <span className="mt-[9px] ml-[50px]">25ºC</span>
    </div>
    <HLine className="bg-[#33691E]" />
    <div className="flex h-[110px] flex-col pt-[21px] pl-[45.500px] text-[19.400px] text-[#757575]">
      <div className="flex"><span className="w-[163px]">IoT Id</span><span className="text-black">1D18AE</span></div>
      <div className="mt-[25px] flex"><span className="w-[235px]">Configuration Id</span><span className="mt-[4px] text-black">1</span></div>
    </div>
    <MapView x={69} y={1134} w={1164} h={310} size="h-[144.500px] w-full" art={OlivaisArt} dy={259}>
      <Label x={669} y={1200} color={HOSP} text="Hospital CUF Descobertas" />
      <Poi x={1202} y={1218} color="#ff7b80" letter="H" />
      <Metro x={642} y={1328} />
      <Marker x={650} y={1286} />
      <Google x={92} y={1404} />
    </MapView>
  </Phone>
);

const WorkspaceScreen = () => (
  <Phone at="left-[51px] top-[781px]" status={{ time: "20:04", pct: "89%", usb: true, pin: true, charging: true }}>
    <div className="h-[8px]" />
    <MapView x={93} y={118} w={1164} h={1160} size="h-[540px] w-full" art={WorkspaceArt}>
      <g transform="translate(63.300 87.500)">
        <circle r="17" fill="#f7f7f7" stroke="#d6d6d6" strokeWidth="1" />
        <path d="M5-10-5.500-1 2 3Z" fill="#e33b2e" />
        <path d="M-5.500-1 2 3-5 9Z" fill="#b9b9b9" />
      </g>
      <Shield x={306} y={409} />
      <Label x={366} y={415} size={13} color="#8a5a2b" rot={-31} text="2ª Circular" />
      <Label x={641} y={419} size={14.2} color={BLUE} bold text="OLIVAIS NORTE" />
      <Label x={96} y={618} size={14.5} color={BLUE} bold text="AS" />
      <Label x={417} y={590} color={GREEN} text="Quinta Pedagógica" />
      <Label x={769} y={626} color={GREEN} end text="dos Olivais" />
      <Label x={139} y={1032} size={14} color={BLUE} bold text="CHELAS" />
      <Label x={493} y={999} color={HOSP} text="Hospital CUF Descobertas" />
      <Label x={1082} y={672} size={12.5} color="#777" rot={36} text="Av. Berlim" />
      <Label x={335} y={1285} size={12.5} color="#777" rot={-38} text=". Paulo VI" />
      <Poi x={734} y={700} color="#4caf50" />
      <Poi x={1026} y={1018} color="#ff7b80" letter="H" />
      <Metro x={336} y={308} />
      <Metro x={920} y={310} />
      <Metro x={992} y={810} />
      <Metro x={474} y={913} />
      <Metro x={148} y={1081} />
      <Metro x={688} y={763} />
      <g transform="translate(150.500 225.300)">
        <path d="M0 0H148V42H80L74 49 68 42H0Z" fill="#fff" stroke="#c9c9c9" strokeWidth=".8" />
        <text x="16" y="26.500" fontSize="15.100" fill="#000">Collect Zone Id</text>
        <text x="125" y="26.500" fontSize="15.100" fill="#757575">2</text>
      </g>
      <Marker x={680} y={740} />
      <Marker x={675} y={788} />
      <Marker x={675} y={697} />
      <Marker x={571} y={869} />
      <Marker x={507} y={880} />
      <Marker x={644} y={825} />
      <g transform="translate(323 535)">
        <rect width="83" height="41" rx="1" fill="#fff" fillOpacity=".85" stroke="#ddd" />
        <path d="M41.500 0V41" stroke="#ddd" />
        <path d="M21 9 32 20.500 21 32 10 20.500Z" fill="#4285F4" />
        <path d="M17 25V20H25M22.500 17 25.500 20 22.500 23" fill="none" stroke="#fff" strokeWidth="1.800" />
        <path d="M52 10H66L72 20V32H52Z" fill="#1e8e55" />
        <path d="M52 32 66 17 72 32Z" fill="#4285F4" />
        <path d="M52 32 68 15 71 18 56 32Z" fill="#fdd663" />
        <path d="M70 26C69 20 64.500 18 64.500 13.500A5.500 5.500 0 0 1 75.500 13.500C75.500 18 71 20 70 26Z" fill="#db4437" />
        <circle cx="70" cy="13.500" r="2" fill="#811411" />
      </g>
      <Google x={115} y={1239} />
    </MapView>
    <Tabs active="WORK SPACE" />
  </Phone>
);

const TrucksScreen = () => (
  <Phone at="left-[770px] top-[771px]" title="Trucks" status={{ time: "20:20", pct: "91%", usb: true, pin: true, charging: true }}>
    <div className="mt-[22px] flex w-[142px] flex-col items-center">
      <div className="flex size-[46px] items-center justify-center rounded-[2px] bg-linear-135 from-[#8BC34A] from-40% to-[#5a8f22]">
        <Truck size="h-[21px] w-[36px]" color="#fff" gap="#7fb840" />
      </div>
      <span className="mt-[14px] text-[19.400px] text-black">06-BG-33</span>
    </div>
  </Phone>
);

const CollectZonesScreen = () => (
  <Phone at="left-[1884px] top-[771px]" title="Collect Zones" status={{ time: "21:37", ...MEO_NIGHT }}>
    <div className="mx-[9px] h-[111px] border-b-[1.300px] border-[#dcdcdc] pt-[17px] text-[15.100px]">
      <div className="mx-[8px] flex h-[41.500px] items-center bg-[#8BC34A] pt-[2px] pl-[14px]">
        <span className="w-[118px] text-[19.400px] text-black/55">Collect Zone</span>
        <span className="w-[149px] text-white">1</span>
        <Chevrons />
      </div>
      <div className="mt-[12px] flex h-[28px] items-center pl-[19px]">
        <Target />
        <span className="w-[326px] shrink-0 pt-[1px] text-center text-[#757575]">38.756393|-9.113894</span>
      </div>
    </div>
  </Phone>
);

const CollectZoneScreen = () => (
  <Phone at="left-[2453px] top-[774px]" status={{ time: "22:03", pct: "74%", usb: true, pin: true, moon: true, charging: true }}>
    <div className="flex h-[55.500px] items-center bg-[#7CB342] pt-[2px] pl-[9px] text-[19.400px] text-white *:shrink-0">
      <span className="w-[118.500px] text-black/55">Collect Zone</span>
      <span className="w-[53px]">1</span>
      <span className="w-[53.500px] text-[15.100px] text-black">Active</span>
      <Switch />
      <span className="ml-[51px]"><Pencil /></span>
    </div>
    <div className="flex h-[65px] pt-[7px] pl-[40.500px]">
      <div className="flex h-[49px] w-[49px] items-center justify-center bg-[#33691E]"><FoldedMap size="h-[47px] w-[47px]" /></div>
      <div className="-mt-[2px] ml-[33px] w-[112px] text-[19.400px] text-[#757575]">
        <div>Latitude :</div>
        <div className="mt-[9px] -ml-[1px]">Longitude :</div>
      </div>
      <div className="mt-[3.500px] text-[15.100px] text-black">
        <div>38.756393</div>
        <div className="mt-[18px] ml-[11px]">-9.113894</div>
      </div>
    </div>
    <HLine className="bg-[#689F11]" />
    <div className="flex h-[118px] pt-[8.500px] text-[15.100px] text-[#757575]">
      <div className="flex w-[109.500px] flex-col items-center">
        <Ring size="size-[54px] p-[2.800px]"><WheelBin size="h-[29px] w-[20px]" color="#8BC34A" /></Ring>
        <span className="mt-[20px] text-[19.400px] text-black">1</span>
      </div>
      <div className="h-[101px] w-[2.300px] bg-[#689F11]" />
      <div className="ml-[27px] grid h-[98px] grid-cols-2 gap-y-[12px]">
        {[
          ["#000", "0%"],
          ["#2f5d17", "0%"],
          ["#2b4c94", "0%"],
          ["#bfb70e", "70%"],
        ].map(([c, v], i) => (
          <div key={i} className="flex h-[43px] w-[126px] items-center">
            <Trash size="h-[43px] w-[36px]" color={c} />
            <span className="w-[92px] pt-[2px] text-center">{v}</span>
          </div>
        ))}
      </div>
    </div>
    <HLine className="bg-[#689F11]" />
    <div className="mt-[9px] ml-[8.700px] h-[374px] w-[371px]">
      <MapView x={95} y={626} w={1113} h={803} size="h-[374px] w-[371px]" art={OlivaisArt}>
        <Shield x={160} y={686} />
        <Label x={366} y={712} size={14} color={BLUE} bold text="OLIVAIS SUL" />
        <Label x={333} y={753} color={GREEN} text="Quinta Pedagógica" />
        <Label x={687} y={788} color={GREEN} end text="dos Olivais" />
        <Poi x={730} y={788} color="#4caf50" />
        <Label x={1027} y={646} size={12.5} color="#777" rot={6} text="Av. Berlim" />
        <Label x={669} y={941} color={HOSP} text="Hospital CUF Descobertas" />
        <Poi x={1202} y={958} color="#ff7b80" letter="H" />
        <Label x={112} y={1233} color={GREEN} text="Parque da" />
        <Label x={114} y={1269} color={GREEN} text="Bela Vista" />
        <Label x={434} y={1259} size={13} color={BLUE} bold text="CHELAS" />
        <Label x={775} y={1410} size={11} color="#777" rot={-58} text="Av.Paulo VI" />
        <Metro x={1020} y={793} />
        <Metro x={721} y={860} />
        <Metro x={642} y={1066} />
        <Metro x={475} y={1328} />
        <g transform="translate(355 636)">
          <rect x="-6" y="-6.500" width="12" height="12.500" rx="1" fill="#1eb4f5" />
          <path d="M-3-4H3V2H-3ZM-3 2-4 4.500M3 2 4 4.500" fill="none" stroke="#fff" strokeWidth="1.300" />
          <path d="M-3-1.500H3" stroke="#fff" />
        </g>
        <Marker x={650} y={1026} />
        <Google x={117} y={1390} />
      </MapView>
    </div>
  </Phone>
);

const ContainersB = () => (
  <Phone at="left-[3033px] top-[774px]" title="Containers" status={{ time: "00:22", pct: "97%", usb: true, pin: true, moon: true, charging: true }}>
    <ContainerRow temp="27ºC" charge="-1" fill="70%" />
    <div className="mt-auto mb-[1px] ml-[320px]"><WheelBin size="h-[80px] w-[50px]" color="#3498db" plus /></div>
  </Phone>
);

const ProfileScreen = () => (
  <Phone at="left-[133px] top-[1541px]" status={{ time: "19:51", pct: "87%", usb: true, pin: true, charging: true }}>
    <div className="mt-[97px] ml-[38px] text-[25.900px] text-[#222]">admin</div>
    <div className="mt-[45px] mr-[16px] ml-[9px] h-[1.500px] bg-[#c9c9c9]" />
    <dl className="mt-[48px] pl-[41px] leading-none">
      {[
        ["Email", "therealadmin@wastecollecter.com"],
        ["Phone", "912388798"],
        ["Role", "administrator"],
      ].map(([k, v]) => (
        <div key={k} className="h-[67px]">
          <dt className="text-[19.400px] font-medium text-[#757575]">{k}</dt>
          <dd className="mt-[14px] ml-[8px] text-[17.200px] text-black">{v}</dd>
        </div>
      ))}
    </dl>
    <Tabs active="PROFILE" />
  </Phone>
);

const ConfigurationScreen = () => (
  <Phone at="left-[4141px] top-[1541px]" title="ConfigurationActivity" status={{ time: "02:36", pct: "51%", usb: true, moon: true, charging: true, extra: true }}>
    <div className="mt-[16.500px] h-[113px] bg-[#7CB342] pt-[13px] pl-[29.500px] text-[19.400px] text-black/55">
      <div className="flex"><span className="w-[244px]">Configuration Id</span><span className="text-white">1</span></div>
      <div className="mt-[15.500px] flex"><span className="w-[227px]">Configuration Name</span><span className="text-white">Test One</span></div>
      <div className="mt-[6.500px] ml-[297.500px] flex h-[24.500px] w-[35px] items-center justify-center rounded-[2px] bg-[#d6d7d7]">
        <svg className="size-[19px]" viewBox="0 0 19 19">
          <path d="M9.500 0V19M0 9.500H19" stroke="#76b900" strokeWidth="5.500" />
        </svg>
      </div>
    </div>
    <div className="mt-[16px] flex h-[404px] flex-col overflow-hidden">
      <CommCard id="2" name="max_threshold" value="70" />
      <CommCard id="4" name="communication_time_interval" value="1" left />
      <CommCard id="5" name="collected_max_threshold" value="" />
    </div>
  </Phone>
);

export default function App() {
  return (
    <div className="h-[2024px] w-[4096px] overflow-hidden bg-white">
      <main className="relative h-[2257px] w-[4567px] bg-white font-['Roboto',sans-serif] [zoom:0.89687]">
        <div className="absolute inset-x-0 top-0 h-[3px] bg-[#e6e6e6]" />
        <div className="absolute top-0 left-0 h-[2253px] w-[2px] bg-linear-to-b from-[#e6e6e6] to-black to-40%" />
        <div className="absolute top-[2px] left-[4560px] h-[2251px] w-[3px] bg-linear-to-b from-[#dedede] to-black to-40%" />
        <div className="absolute top-[2px] left-[4563px] h-[2255px] w-[2px] bg-[#bdbdbd]" />
        <div className="absolute top-[2250px] left-0 h-[3px] w-[4563px] bg-black" />
        <div className="absolute top-[2253px] left-0 h-[4px] w-[4565px] bg-[#bdbdbd]" />

        <ManageScreen />
        <RoutesScreen />
        <RouteScreen />
        <Phone at="left-[1884px] top-[21px]" title="Containers" status={{ time: "21:37", ...MEO_NIGHT }}>
          <ContainerRow zone="1" temp="25.0ºC" charge="-1.0" fill="69.0%" />
        </Phone>
        <ContainerScreen />
        <Phone at="left-[4141px] top-[21px]" title="Washes" status={{ time: "21:39", ...MEO_NIGHT }}>
          <div className="mt-[25px]">
            <DateBar when="Tue Nov 11 08:40:00 GMT+00:00 1997" bar="mx-[4.500px] pl-[19px] pr-[30px]" />
          </div>
        </Phone>

        <WorkspaceScreen />
        <TrucksScreen />
        <CollectZonesScreen />
        <CollectZoneScreen />
        <ContainersB />
        <Phone at="left-[4141px] top-[774px]" title="ContainerCollects" status={{ time: "21:38", ...MEO_NIGHT }}>
          <div className="mt-[9px]" />
          {["Tue Jun 26 18:30:00 GMT+01:00 2018", "Tue Nov 11 08:36:00 GMT+00:00 1997"].map((d) => (
            <div key={d} className="mx-[9px] h-[52.700px] border-b-[1.300px] border-[#dcdcdc] pt-[9px]">
              <DateBar when={d} bar="mx-[8.500px] pl-[17px] pr-[17px]" />
            </div>
          ))}
        </Phone>

        <ProfileScreen />
        <Phone at="left-[770px] top-[1541px]" title="Stations" status={{ time: "21:39", ...MEO_NIGHT }}>
          <div className="mt-[9px]" />
          <StationRow n="1" pos="0.0|0.0" kind="base" />
          <StationRow n="3" pos="2.0|2.0" kind="drop_zone" />
          <StationRow n="4" pos="38.756035|-9.115239" kind="base" />
          <StationRow n="5" pos="38.762302|-9.114037" kind="drop_zone" />
        </Phone>
        <Phone at="left-[1884px] top-[1541px]" title="LandFills" status={{ time: "21:37", ...MEO_NIGHT }}>
          <div className="h-[134px] border-b-[1.300px] border-[#dcdcdc] pt-[24px] text-[15.100px]">
            <div className="mx-[4.500px] flex h-[42px] items-center bg-[#7CB342] pt-[4px] pl-[9px]">
              <span className="w-[79px] text-[19.400px] text-black/55">Landfill</span>
              <span className="text-white">3</span>
            </div>
            <div className="mt-[11px] flex h-[28px] items-center pl-[44px]">
              <Target />
              <span className="w-[323px] shrink-0 pt-[2px] text-center text-black">2.0|2.0</span>
            </div>
          </div>
        </Phone>
        <ConfigurationScreen />
        <Connectors />
      </main>
    </div>
  );
}
